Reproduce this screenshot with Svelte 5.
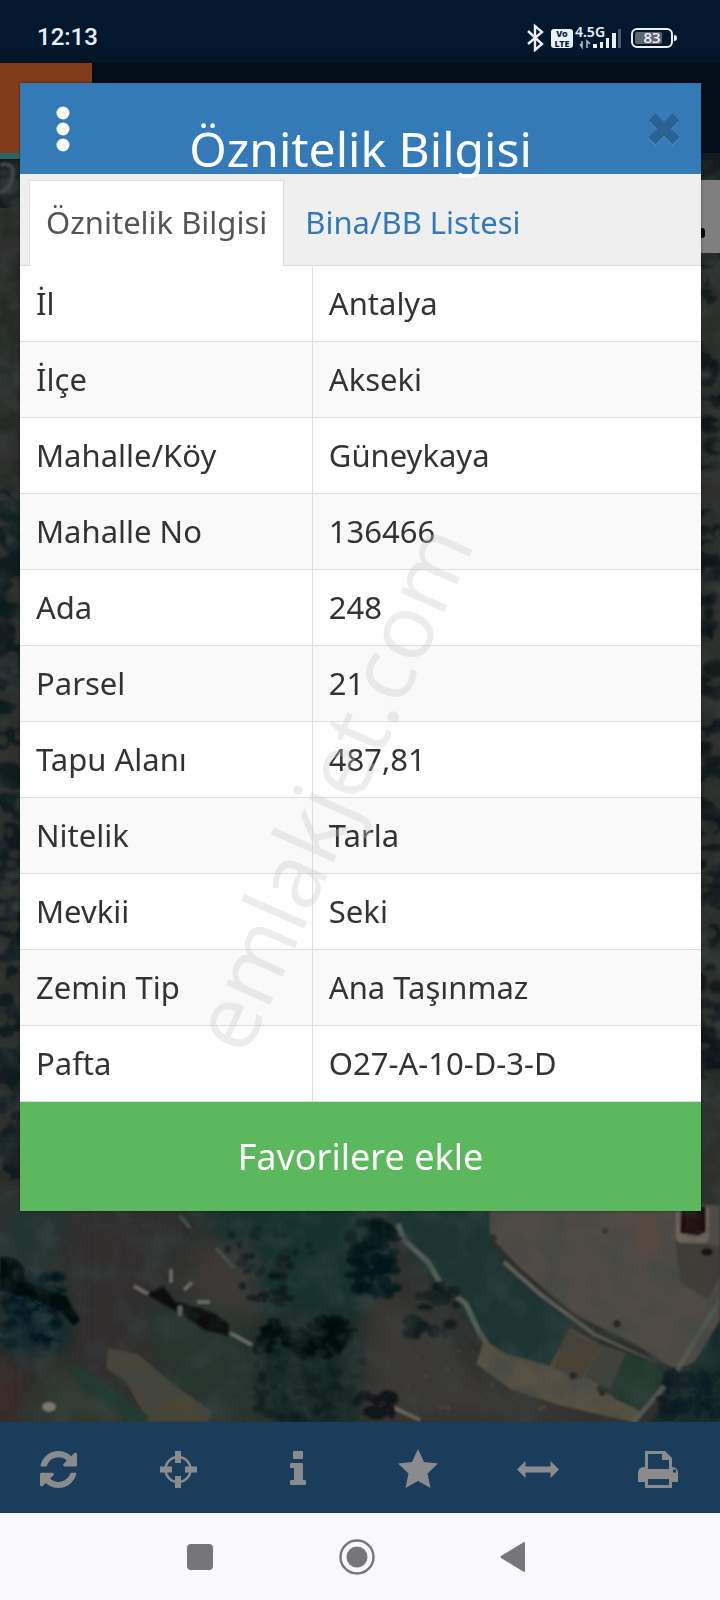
<script>
  let activeTab = "info";

  const rows = [
    ["İl", "Antalya"],
    ["İlçe", "Akseki"],
    ["Mahalle/Köy", "Güneykaya"],
    ["Mahalle No", "136466"],
    ["Ada", "248"],
    ["Parsel", "21"],
    ["Tapu Alanı", "487,81"],
    ["Nitelik", "Tarla"],
    ["Mevkii", "Seki"],
    ["Zemin Tip", "Ana Taşınmaz"],
    ["Pafta", "O27-A-10-D-3-D"],
  ];

  // small seeded generator so the tree cover is the same on every load
  let seed = 7;
  function rnd() {
    seed = (seed * 16807) % 2147483647;
    return seed / 2147483647;
  }

  function scatter(x, y, w, h, n, size, fill) {
    const out = [];
    for (let i = 0; i < n; i++) {
      out.push({
        x: x + rnd() * w,
        y: y + rnd() * h,
        rx: size * (0.4 + rnd()),
        ry: size * (0.3 + rnd() * 0.7),
        fill,
      });
    }
    return out;
  }

  const trees = [
    ...scatter(0, 1275, 60, 70, 60, 7, "#07171d"),
    ...scatter(20, 1290, 50, 60, 25, 5, "#14302f"),
    ...scatter(240, 1255, 50, 50, 30, 5, "#0a1718"),
    ...scatter(260, 1320, 90, 36, 60, 7, "#050f10"),
    ...scatter(255, 1350, 110, 70, 75, 5, "#0b1f1d"),
    ...scatter(350, 1220, 45, 75, 60, 7, "#07141a"),
    ...scatter(410, 1285, 50, 50, 18, 7, "#101b1b"),
    ...scatter(660, 1370, 60, 50, 55, 7, "#0b2023"),
    ...scatter(362, 1390, 30, 26, 16, 7, "#101314"),
    ...scatter(210, 1225, 120, 30, 12, 4, "#0c2221"),
    ...scatter(0, 160, 22, 340, 35, 9, "#262a26"),
    ...scatter(0, 480, 22, 700, 90, 12, "#0d1b1e"),
    ...scatter(0, 480, 22, 700, 40, 8, "#2b302b"),
    ...scatter(698, 250, 22, 850, 90, 11, "#0d191b"),
    ...scatter(698, 250, 22, 850, 60, 8, "#2c302c"),
  ];

  const stones = scatter(400, 1350, 150, 60, 16, 3, "#5b554b");
</script>

<div class="screen">
  <div class="status">
    <span class="clock">12:13</span>
    <svg class="indicators" viewBox="520 20 160 30" aria-label="Durum">
      <path d="M528 29l14 13-7 6V24l7 6-14 12" fill="none" stroke="#e8f1fa" stroke-width="2.4" />
      <rect x="551" y="27" width="22" height="19" rx="3" fill="#e8f1fa" />
      <text x="562" y="35" font-size="9" font-weight="800" text-anchor="middle" fill="#03182b">Vo</text>
      <text x="562" y="45" font-size="9" font-weight="800" text-anchor="middle" fill="#03182b">LTE</text>
      <text x="575" y="35" font-size="14" font-weight="600" fill="#e8f1fa">4.5G</text>
      <path d="M582 39v6l-2-3M587 46v-7l3 3" fill="none" stroke="#b6c1cc" stroke-width="1.5" />
      <path d="M593 46v-4h4v4zM600 46v-6h3v6zM606 46v-10h3v10zM612 46v-15h4v15z" fill="#e8f1fa" />
      <path d="M618 46v-19h3v19z" fill="#4b5b6b" />
      <rect x="632" y="27" width="40" height="18" rx="5" fill="none" stroke="#e8f1fa" stroke-width="2" />
      <rect x="635" y="30" width="27" height="12" rx="2" fill="#5a6775" />
      <path d="M674 33q3 0 3 3t-3 3z" fill="#e8f1fa" />
      <text x="652" y="41" font-size="15" font-weight="500" text-anchor="middle" fill="#f4f8fc">83</text>
    </svg>
  </div>

  <div class="topbar">
    <div class="brand"></div>
  </div>

  <div class="map">
    <svg class="imagery" viewBox="0 153 720 1269" preserveAspectRatio="xMidYMax slice" aria-hidden="true">
      <defs>
        <filter id="soft"><feGaussianBlur stdDeviation="1.3" /></filter>
        <filter id="haze" x="-30%" y="-30%" width="160%" height="160%"><feGaussianBlur stdDeviation="10" /></filter>
        <filter id="grain" x="0" y="0" width="100%" height="100%">
          <feTurbulence type="fractalNoise" baseFrequency="0.035" numOctaves="4" seed="3" />
          <feColorMatrix values="0 0 0 0 0.04  0 0 0 0 0.06  0 0 0 0 0.06  1.3 0 0 0 -0.55" />
        </filter>
      </defs>
      <rect y="153" width="720" height="1269" fill="#2f302d" />
      <rect y="153" width="720" height="55" fill="#121c1e" />
      <g filter="url(#haze)">
        <path d="M0 1200h75l-30 80-45 10z" fill="#243531" />
        <path d="M80 1210h90l-20 150-70 30z" fill="#312f2f" />
        <path d="M190 1200h190v110l-120 10z" fill="#17332f" />
        <path d="M0 1280l60 10 10 60-70 10z" fill="#10262c" />
        <path d="M140 1300l110 10 20 110-100-10z" fill="#26342e" />
        <path d="M250 1330l110-20v120H270z" fill="#142c28" />
        <path d="M200 1240l50 10 10 70-70-20z" fill="#3c3834" />
        <path d="M60 1370l80 50H30z" fill="#313c32" />
        <path d="M0 1360l12 10v45l-12 5z" fill="#4a2020" />
        <path d="M370 1290l50 20 60 70 130 40H370z" fill="#3a3936" />
      </g>
      <g filter="url(#soft)">
        <path d="M108 1348l30 6 35 30 40 28-5 10h-60l-22-40-20-14z" fill="#494439" />
        <path d="M68 1362l28 14 55 42-20 4-50-34z" fill="#213b31" />
        <path d="M396 1205h94l2 38 14 20 34 30 34 22-18 42-10 8-50-12-28-32-54-60-20-40z" fill="#1b3431" />
        <path d="M490 1205h230v140l-32 20-14 3-36-22-64-32-54-46-30-32z" fill="#514b45" />
        <path d="M610 1205h70l-30 60z" fill="#5a4c42" opacity="0.4" />
        <path d="M675 1240l45 6v30l-12 24-28-18z" fill="#403c38" />
        <path d="M504 1262l36 32 54 40 80 34" fill="none" stroke="#625f57" stroke-width="4" />
        <path d="M398 1224l6 16 24 22 14 24 24 18 12 26 16 26" fill="none" stroke="#59605a" stroke-width="5" />
        <path d="M484 1340l22 14 44 12 20-38 36 20 6 6-16 36 30 10 14 12-8 10-70-16-50-16-36-26z" fill="#565143" />
        <path d="M567 1330l34 16-20 34-28-12z" fill="#484334" />
        <path d="M602 1345l24 8-16 36-26-12z" fill="#42433b" />
        <path d="M626 1352l42 20-28 38-28-12z" fill="#213a2e" />
        <path d="M594 1331l78 37" fill="none" stroke="#28302b" stroke-width="3" />
        <path d="M720 1320l-30 50-40 52h70z" fill="#15292c" />
        <path d="M720 1300l-44 72-44 52" fill="none" stroke="#545a55" stroke-width="5" />
        <path d="M395 1408l25 12" stroke="#6b675d" stroke-width="4" />
        <rect x="676" y="1205" width="33" height="38" rx="6" fill="#6d655a" />
        <path d="M681 1206h25v26l-8 4-18-3z" fill="#21100e" />
        <ellipse cx="707" cy="1252" rx="6" ry="4" fill="#181414" />
        {#each trees as t}
          <ellipse cx={t.x} cy={t.y} rx={t.rx} ry={t.ry} fill={t.fill} opacity="0.85" />
        {/each}
        {#each stones as s}
          <ellipse cx={s.x} cy={s.y} rx={s.rx} ry={s.ry} fill={s.fill} opacity="0.4" />
        {/each}
        <path d="M0 1258q14-4 24 10l2 14 16 6 24 8 14 24-6 6-14-16-34-14-26-6z" fill="#030a0d" />
        <path d="M147 1294l16-8 12 16 24 6 16 6 14 10v12l-24-6-24-16-18-10z" fill="#0b0f0d" />
        <path d="M134 1286l14 8M171 1269v14M184 1290l8-8M197 1302h13M180 1306v10M230 1333l22 12" stroke="#696b63" stroke-width="4" />
        <path d="M180 1216l10 12M216 1248l18 20" stroke="#46534d" stroke-width="3" />
        <ellipse cx="49" cy="1407" rx="7" ry="5" fill="#7d786d" />
        <circle cx="617" cy="1324" r="4" fill="#26221f" />
        <circle cx="573" cy="1376" r="4" fill="#26221f" />
        <circle cx="602" cy="1393" r="3" fill="#26221f" />
        <circle cx="493" cy="1238" r="4" fill="#302f2a" />
        <circle cx="605" cy="1231" r="3" fill="#3a3532" />
        <path d="M0 165q16-4 12 14-4 12-12 14" fill="none" stroke="#3f4c46" stroke-width="4" />
      </g>
      <rect y="160" width="720" height="1262" filter="url(#grain)" />
    </svg>
    <div class="side-control"></div>
  </div>

  <div class="toolbar">
    <button aria-label="Yenile">
      <svg viewBox="0 0 48 48">
        <path transform="translate(4 4) scale(0.0241)" d="M1511 1056q0 5-1 7-64 268-268 434.500t-478 166.500q-146 0-282.500-55t-243.500-157l-129 129q-19 19-45 19t-45-19-19-45v-448q0-26 19-45t45-19h448q26 0 45 19t19 45-19 45l-137 137q71 66 161 102t187 36q134 0 250-65t186-179q11-17 53-117 8-23 30-23h192q13 0 22.500 9.500t9.500 22.500zm25-800v448q0 26-19 45t-45 19h-448q-26 0-45-19t-19-45 19-45l138-138q-148-137-349-137-134 0-250 65t-186 179q-11 17-53 117-8 23-30 23h-199q-13 0-22.500-9.500t-9.500-22.500v-7q65-268 270-434.500t480-166.500q146 0 284 55.500t245 156.500l130-129q19-19 45-19t45 19 19 45z" />
      </svg>
    </button>
    <button aria-label="Konum">
      <svg viewBox="0 0 48 48">
        <circle cx="22" cy="25.500" r="12.500" fill="none" stroke="#8a8b8d" stroke-width="2.600" />
        <path d="M19 7h6v12h-6zM19 32h6v12h-6zM4 22.500h12v6H4zM29 22.500h12v6H29z" />
      </svg>
    </button>
    <button aria-label="Bilgi">
      <svg viewBox="0 0 48 48">
        <path d="M18 7h8q1 0 1 1v6q0 1-1 1h-8q-1 0-1-1V8q0-1 1-1zM15 19h11q1 0 1 1v16h2q1 0 1 1v3q0 1-1 1H15q-1 0-1-1v-3q0-1 1-1h3V24h-3q-1 0-1-1v-3q0-1 1-1z" />
      </svg>
    </button>
    <button aria-label="Favoriler">
      <svg viewBox="0 0 48 48">
        <path d="M22 5l6 13 14 1.500-10.500 10L34.500 44 22 37 9.500 44l3-14.500L2 19.500 16 18z" />
      </svg>
    </button>
    <button aria-label="Ölçüm">
      <svg viewBox="0 0 48 48">
        <path d="M1 25.500L9.500 17v5.500h25V17l8.500 8.500-8.500 8.500v-5.500h-25V34z" />
      </svg>
    </button>
    <button aria-label="Yazdır">
      <svg viewBox="0 0 48 48">
        <path fill-rule="evenodd" d="M9 7h20l7 7v9q6 0 6 6v9h-6v6H9v-6H2v-9q0-6 6-6h1zM12 10v15h21v-9h-7v-6zM12 35v6h21v-6zM37 25.500v3h3v-3z" />
      </svg>
    </button>
  </div>

  <nav class="system">
    <button aria-label="Son uygulamalar">
      <svg viewBox="0 0 36 36"><rect x="4" y="5" width="26" height="26" rx="4" /></svg>
    </button>
    <button aria-label="Ana ekran">
      <svg viewBox="0 0 36 36">
        <circle cx="18" cy="18" r="16.500" fill="none" stroke="#77767a" stroke-width="2.400" />
        <circle cx="18" cy="18" r="10.500" />
      </svg>
    </button>
    <button aria-label="Geri">
      <svg viewBox="0 0 36 36"><path d="M29 3q1 0 1 1v28q0 1-1 1L6 19q-1-1 0-2z" /></svg>
    </button>
  </nav>

  <section class="dialog" role="dialog" aria-labelledby="dialog-title">
    <header>
      <button class="menu" aria-label="Menü">
        <svg viewBox="0 0 14 46">
          <circle cx="7" cy="7" r="6.500" />
          <circle cx="7" cy="23" r="6.500" />
          <circle cx="7" cy="39" r="6.500" />
        </svg>
      </button>
      <h1 id="dialog-title">Öznitelik Bilgisi</h1>
      <button class="close" aria-label="Kapat">
        <svg viewBox="0 0 34 34">
          <path class="edge" d="M5 6l24 24M29 6L5 30" />
          <path d="M5 5l24 24M29 5L5 29" />
        </svg>
      </button>
    </header>

    <div class="tabs" role="tablist">
      <button role="tab" class:active={activeTab === "info"} aria-selected={activeTab === "info"} on:click={() => (activeTab = "info")}>
        Öznitelik Bilgisi
      </button>
      <button role="tab" class:active={activeTab === "list"} aria-selected={activeTab === "list"} on:click={() => (activeTab = "list")}>
        Bina/BB Listesi
      </button>
    </div>

    <table>
      <tbody>
        {#each rows as [label, value]}
          <tr>
            <th scope="row">{label}</th>
            <td>{value}</td>
          </tr>
        {/each}
      </tbody>
    </table>

    <button class="favourite">Favorilere ekle</button>
  </section>

  <div class="watermark">emlakjet.com</div>
</div>

<style>
  :global(body) {
    background: #2f302d;
  }

  .screen {
    position: relative;
    display: flex;
    flex-direction: column;
    min-height: 100vh;
    overflow: hidden;
    font-family: "Noto Sans", "Open Sans", sans-serif;
    color: #333;
  }

  button {
    border: 0;
    padding: 0;
    background: none;
    font: inherit;
    color: inherit;
    cursor: pointer;
  }

  svg {
    display: block;
  }

  .status {
    display: flex;
    justify-content: space-between;
    align-items: center;
    height: 63px;
    padding: 10px 40px 0 37px;
    box-sizing: border-box;
    background: linear-gradient(#03182d 70%, #031522);
  }

  .clock {
    font-family: Roboto, sans-serif;
    font-size: 24px;
    font-weight: 500;
    color: #e8f1fa;
  }

  .indicators {
    width: 160px;
    height: 30px;
  }

  .topbar {
    height: 90px;
    background: #020e19;
  }

  .brand {
    width: 92px;
    height: 90px;
    background: #823c1c;
    border-bottom: 6px solid #2c6364;
  }

  .map {
    position: relative;
    flex: 1;
  }

  .imagery {
    position: absolute;
    inset: 0;
    width: 100%;
    height: 100%;
    z-index: -1;
  }

  .side-control {
    width: 40px;
    height: 73px;
    margin: 27px 0 0 auto;
    background: #7f7f7f;
  }

  .side-control::before {
    content: "";
    display: block;
    width: 10px;
    height: 10px;
    margin-left: 15px;
    border-radius: 3px;
    background: #0a0a0a;
    transform: translateY(48px);
  }

  .toolbar {
    display: grid;
    grid-template-columns: repeat(6, 1fr);
    align-items: center;
    height: 91px;
    background: #1b3d5c;
  }

  .toolbar svg {
    width: 48px;
    height: 48px;
    margin: 0 auto;
    fill: #8a8b8d;
  }

  .system {
    display: flex;
    justify-content: center;
    align-items: center;
    gap: 120px;
    height: 87px;
    padding-right: 7px;
    background: #f8f8fd;
  }

  .system svg {
    width: 36px;
    height: 36px;
    fill: #77767a;
  }

  .dialog {
    position: absolute;
    top: 83px;
    left: 20px;
    right: 19px;
    background: #fff;
    box-shadow: 0 0 2px rgba(0, 0, 0, 0.6);
  }

  header {
    display: grid;
    grid-template-columns: 86px 1fr 86px;
    height: 91px;
    background: #337ab7;
  }

  .menu svg {
    width: 14px;
    height: 46px;
    margin: 0 auto;
    fill: #fff;
  }

  .close svg {
    width: 34px;
    height: 34px;
    margin: 0 20px 0 auto;
    fill: none;
    stroke: #2a6393;
    stroke-width: 10px;
  }

  .close .edge {
    stroke: #5a93c4;
  }

  h1 {
    margin: 0;
    padding-top: 41px;
    font-size: 48px;
    line-height: 50px;
    font-weight: 400;
    text-align: center;
    white-space: nowrap;
    color: #fff;
  }

  .tabs {
    display: flex;
    gap: 4px;
    padding: 6px 9px 0;
    background: #efefef;
    border-bottom: 1px solid #ddd;
  }

  .tabs button {
    height: 86px;
    margin-bottom: -1px;
    padding: 0 16px 4px;
    border: 1px solid transparent;
    border-bottom: 0;
    font-size: 31px;
    color: #337ab7;
  }

  .tabs .active {
    background: #fff;
    border-color: #ddd;
    color: #555;
  }

  table {
    width: 100%;
    border-spacing: 0;
    table-layout: fixed;
  }

  th,
  td {
    padding: 16px;
    border-bottom: 1px solid #ddd;
    font-size: 31px;
    line-height: 43px;
    font-weight: 400;
    text-align: left;
  }

  th {
    width: 43%;
    box-sizing: border-box;
    border-right: 1px solid #ddd;
  }

  tr:nth-child(even) {
    background: #f9f9f9;
  }

  .favourite {
    display: block;
    width: 100%;
    height: 109px;
    background: #5cb85c;
    color: #fff;
    font-size: 36px;
  }

  .watermark {
    position: absolute;
    top: 50%;
    left: 50%;
    padding-bottom: 68px;
    transform: translate(-50%, -50%) rotate(-66deg);
    font-family: "Open Sans", sans-serif;
    font-size: 90px;
    line-height: 90px;
    color: rgba(200, 200, 200, 0.35);
    pointer-events: none;
  }
</style>
